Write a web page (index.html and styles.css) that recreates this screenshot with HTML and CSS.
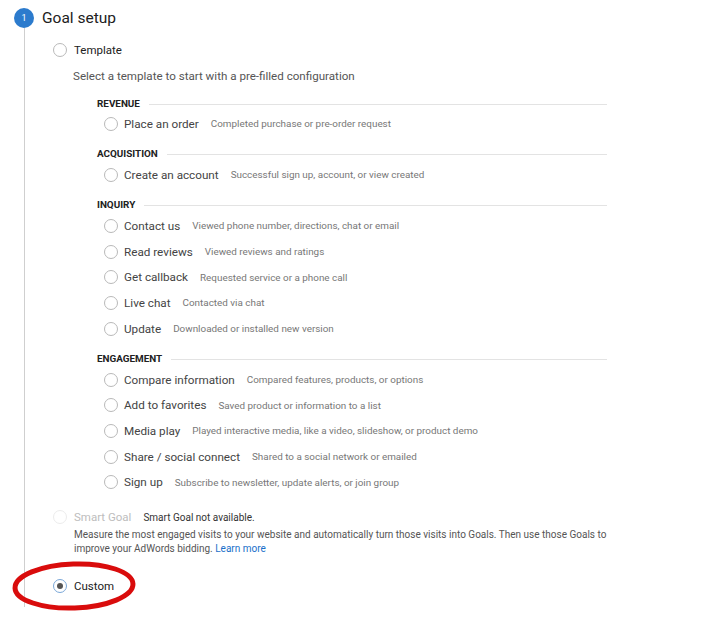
FILE: index.html
```html
<!DOCTYPE html>
<html>
<head>
<meta charset="utf-8">
<link rel="stylesheet" href="styles.css">
</head>
<body>
<div class="step">
  <div class="step-head">
    <span class="step-num">1</span>
    <span class="step-title">Goal setup</span>
  </div>
  <div class="step-body">
    <div class="opt">
      <span class="radio"></span><span class="opt-label">Template</span>
    </div>
    <p class="hint">Select a template to start with a pre-filled configuration</p>

    <div class="groups">
      <div class="group">
        <div class="cat"><span>REVENUE</span></div>
        <div class="item"><span class="radio"></span><span class="item-label">Place an order</span><span class="item-desc">Completed purchase or pre-order request</span></div>
      </div>
      <div class="group">
        <div class="cat"><span>ACQUISITION</span></div>
        <div class="item"><span class="radio"></span><span class="item-label">Create an account</span><span class="item-desc">Successful sign up, account, or view created</span></div>
      </div>
      <div class="group">
        <div class="cat"><span>INQUIRY</span></div>
        <div class="item"><span class="radio"></span><span class="item-label">Contact us</span><span class="item-desc">Viewed phone number, directions, chat or email</span></div>
        <div class="item"><span class="radio"></span><span class="item-label">Read reviews</span><span class="item-desc">Viewed reviews and ratings</span></div>
        <div class="item"><span class="radio"></span><span class="item-label">Get callback</span><span class="item-desc">Requested service or a phone call</span></div>
        <div class="item"><span class="radio"></span><span class="item-label">Live chat</span><span class="item-desc">Contacted via chat</span></div>
        <div class="item"><span class="radio"></span><span class="item-label">Update</span><span class="item-desc">Downloaded or installed new version</span></div>
      </div>
      <div class="group">
        <div class="cat"><span>ENGAGEMENT</span></div>
        <div class="item"><span class="radio"></span><span class="item-label">Compare information</span><span class="item-desc">Compared features, products, or options</span></div>
        <div class="item"><span class="radio"></span><span class="item-label">Add to favorites</span><span class="item-desc">Saved product or information to a list</span></div>
        <div class="item"><span class="radio"></span><span class="item-label">Media play</span><span class="item-desc">Played interactive media, like a video, slideshow, or product demo</span></div>
        <div class="item"><span class="radio"></span><span class="item-label">Share / social connect</span><span class="item-desc">Shared to a social network or emailed</span></div>
        <div class="item"><span class="radio"></span><span class="item-label">Sign up</span><span class="item-desc">Subscribe to newsletter, update alerts, or join group</span></div>
      </div>
    </div>

    <div class="opt opt-smart">
      <span class="radio radio-disabled"></span><span class="opt-label disabled">Smart Goal</span><span class="smart-note">Smart Goal not available.</span>
    </div>
    <p class="smart-desc">Measure the most engaged visits to your website and automatically turn those visits into Goals. Then use those Goals to improve your AdWords bidding. <a class="link" href="#">Learn more</a></p>

    <div class="opt opt-custom">
      <span class="radio radio-checked"></span><span class="opt-label">Custom</span>
      <svg class="annot" width="132" height="56" viewBox="0 0 132 56"><ellipse cx="66" cy="28" rx="59" ry="22" fill="none" stroke="#d90c0c" stroke-width="5" transform="rotate(-2 66 28)"/></svg>
    </div>
  </div>
</div>
</body>
</html>
```

FILE: styles.css
```css
* { box-sizing: border-box; }
html, body { margin: 0; padding: 0; background: #fff; }
body {
  font-family: Roboto, "Liberation Sans", Arial, sans-serif;
  color: #212121;
  width: 721px;
  height: 617px;
  overflow: hidden;
}
.step { padding-top: 8px; }
.step-head {
  display: flex;
  align-items: center;
  height: 20px;
  padding-left: 14px;
}
.step-num {
  width: 20px;
  height: 20px;
  border-radius: 50%;
  background: #2c7bcd;
  color: #fff;
  font-size: 9px;
  display: flex;
  align-items: center;
  justify-content: center;
  margin-right: 8px;
}
.step-title { font-size: 15.5px; color: #212121; }
.step-body {
  margin-left: 24px;
  border-left: 1px solid #cfcfcf;
  padding: 10px 0 9px 28px;
}
.radio {
  display: inline-block;
  flex: none;
  width: 14px;
  height: 14px;
  border: 1px solid #b9b9b9;
  border-radius: 50%;
  background: #fff;
  position: relative;
}
.radio-disabled { border-color: #ececec; }
.radio-checked { border-color: #7aa7d8; }
.radio-checked::after {
  content: "";
  position: absolute;
  left: 3px; top: 3px;
  width: 6px; height: 6px;
  border-radius: 50%;
  background: #555;
}
.opt {
  display: flex;
  align-items: center;
  height: 24px;
}
.opt-label { margin-left: 7px; font-size: 11.5px; color: #212121; }
.opt-label.disabled { color: #bdbdbd; }
.hint {
  margin: 6px 0 0 20px;
  font-size: 11.6px;
  line-height: 16px;
  color: #555;
}
.groups {
  margin: 10px 0 0 44px;
  width: 510px;
}
.group + .group { margin-top: 8.3px; }
.cat {
  display: flex;
  align-items: center;
  height: 17px;
  font-size: 9.9px;
  font-weight: 700;
  color: #212121;
  padding-top: 1px;
}
.cat::after {
  content: "";
  flex: 1;
  height: 1px;
  background: #e3e3e3;
  margin-left: 9px;
  margin-top: 2px;
}
.item {
  display: flex;
  align-items: center;
  height: 25.7px;
  padding-left: 7px;
}
.item-label { margin-left: 6px; font-size: 11.7px; color: #444; }
.item-desc { margin-left: 12px; font-size: 9.9px; color: #777; }
.opt-smart { height: 22px; margin-top: 11px; }
.smart-note { margin-left: 12px; font-size: 10px; color: #333; }
.smart-desc {
  margin: 0 0 0 21px;
  width: 540px;
  font-size: 10px;
  line-height: 14px;
  color: #555;
}
.link { color: #1a6fc9; text-decoration: none; }
.opt-custom { margin-top: 18px; position: relative; }
.annot {
  position: absolute;
  left: -45px;
  top: -16px;
  pointer-events: none;
}
```
